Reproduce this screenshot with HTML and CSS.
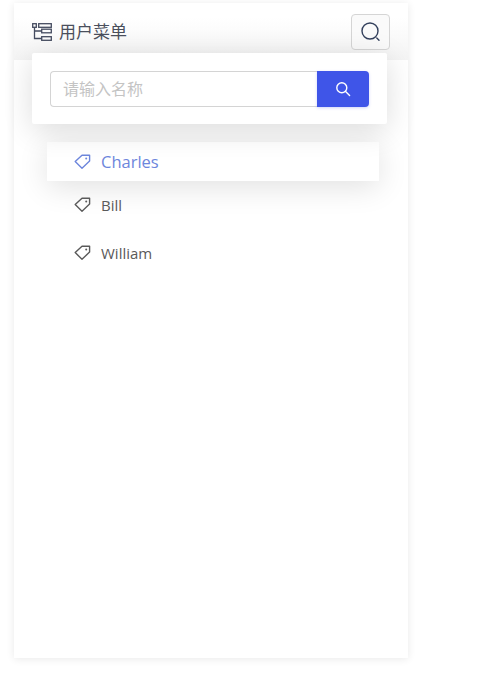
FILE: index.html
```html
<!DOCTYPE html>
<html lang="zh-CN">
<head>
  <meta charset="UTF-8" />
  <title>用户菜单</title>
  <link rel="stylesheet" href="styles.css">
</head>
<body>
  <div class="panel">
    <div class="header">
      <div class="title">
        <svg class="tree-icon" width="20" height="20" viewBox="0 0 20 20" fill="none" stroke="#454c60" stroke-width="1.3">
          <rect x="0.7" y="0.7" width="3.6" height="3.6"/>
          <path d="M2.5 4.3v11.2h7M2.5 8h7"/>
          <rect x="6.7" y="0.7" width="12.6" height="3.6"/>
          <rect x="9.7" y="6.2" width="9.6" height="3.6"/>
          <rect x="9.7" y="13.7" width="9.6" height="3.6"/>
        </svg>
        <span>用户菜单</span>
      </div>
      <button class="toggle">
        <svg width="22" height="22" viewBox="0 0 22 22" fill="none" stroke="#33405c" stroke-width="1.4">
          <circle cx="10" cy="10" r="8"/>
          <path d="M16.8 17l2.2 2.2" stroke-linecap="round"/>
        </svg>
      </button>
    </div>

    <div class="search-pop">
      <div class="search">
        <input type="text" placeholder="请输入名称" />
        <button class="search-btn">
          <svg width="16" height="16" viewBox="0 0 16 16" fill="none" stroke="#fff" stroke-width="1.4">
            <circle cx="6.8" cy="6.8" r="5"/>
            <path d="M10.6 10.6l4 4" stroke-linecap="round"/>
          </svg>
        </button>
      </div>
    </div>

    <ul class="menu">
      <li class="item active">
        <svg class="tag" width="17" height="16" viewBox="0 0 17 16" fill="none" stroke="currentColor" stroke-width="1.4">
          <path d="M8 1.2h7.6v5.9L8 14.2 1.2 7.6z" stroke-linejoin="round"/>
          <circle cx="12.2" cy="4.6" r="1" fill="currentColor" stroke="none"/>
        </svg>
        <span>Charles</span>
      </li>
      <li class="item">
        <svg class="tag" width="17" height="16" viewBox="0 0 17 16" fill="none" stroke="currentColor" stroke-width="1.4">
          <path d="M8 1.2h7.6v5.9L8 14.2 1.2 7.6z" stroke-linejoin="round"/>
          <circle cx="12.2" cy="4.6" r="1" fill="currentColor" stroke="none"/>
        </svg>
        <span>Bill</span>
      </li>
      <li class="item">
        <svg class="tag" width="17" height="16" viewBox="0 0 17 16" fill="none" stroke="currentColor" stroke-width="1.4">
          <path d="M8 1.2h7.6v5.9L8 14.2 1.2 7.6z" stroke-linejoin="round"/>
          <circle cx="12.2" cy="4.6" r="1" fill="currentColor" stroke="none"/>
        </svg>
        <span>William</span>
      </li>
    </ul>
  </div>
</body>
</html>
```

FILE: styles.css
```css
* {
  box-sizing: border-box;
}
body {
  margin: 0;
  padding-top: 3px;
  min-height: 677px;
  background: #fff;
  font-family: "Open Sans", "Noto Sans CJK SC", sans-serif;
  color: #555;
}
.panel {
  position: relative;
  width: 394px;
  height: 655px;
  margin-left: 14px;
  background: #fff;
  box-shadow: 0 1px 8px rgba(0, 0, 0, 0.09);
}
.header {
  display: flex;
  align-items: center;
  justify-content: space-between;
  height: 57px;
  padding: 0 18px;
  background: linear-gradient(#fff 25%, #f4f4f4);
}
.title {
  display: flex;
  align-items: center;
  gap: 7px;
  font-size: 17px;
  line-height: 24px;
  color: #4a4f5c;
}
.tree-icon {
  margin-top: 3px;
}
.toggle {
  display: flex;
  align-items: center;
  justify-content: center;
  width: 39px;
  height: 36px;
  margin-top: 1px;
  padding: 0;
  background: #fafafa;
  border: 1px solid #d5d5d5;
  border-radius: 4px;
}
.search-pop {
  position: absolute;
  top: 50px;
  left: 18px;
  width: 355px;
  height: 71px;
  padding: 18px;
  background: #fff;
  border-radius: 2px;
  box-shadow: 0 6px 30px rgba(0, 0, 0, 0.14);
}
.search {
  display: flex;
  height: 36px;
}
.search input {
  flex: 1;
  min-width: 0;
  padding: 0 12px;
  font-family: inherit;
  font-size: 16px;
  background: #fff;
  border: 1px solid #d4d4d4;
  border-right: 0;
  border-radius: 4px 0 0 4px;
  outline: none;
}
.search input::placeholder {
  color: #c4c4c4;
}
.search-btn {
  display: flex;
  align-items: center;
  justify-content: center;
  width: 52px;
  padding: 0;
  background: #3f55e8;
  border: 0;
  border-radius: 0 4px 4px 0;
  box-shadow: 0 1px 3px rgba(63, 85, 232, 0.25);
}
.menu {
  margin: 82px 29px 0 33px;
  padding: 0;
  list-style: none;
}
.item {
  display: flex;
  align-items: center;
  gap: 10px;
  height: 39px;
  margin-bottom: 9px;
  padding-left: 27px;
  font-size: 15px;
  color: #5a5a5a;
}
.item.active {
  margin-bottom: 4px;
  font-size: 16.5px;
  color: #6d86dc;
  background: #fff;
  box-shadow: 0 6px 30px rgba(0, 0, 0, 0.12);
}
```
